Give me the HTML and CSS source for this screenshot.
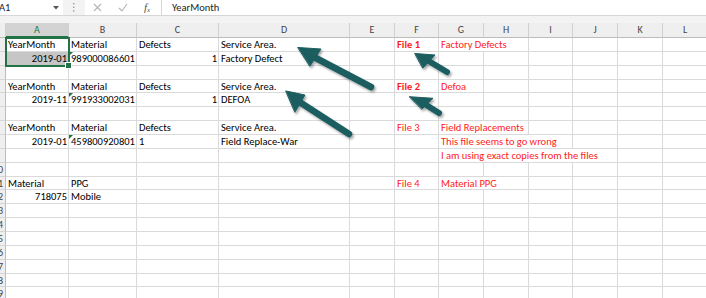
FILE: index.html
```html
<!DOCTYPE html>
<html>
<head>
<meta charset="utf-8">
<link rel="stylesheet" href="styles.css">
</head>
<body>
<div class="topbar">
  <div class="namebox"><span class="nb-text">A1</span><svg class="caret" width="6" height="4" viewBox="0 0 6 4"><path d="M0 0H6L3 3.5Z" fill="#555"/></svg></div>
  <div class="grip"><svg width="2" height="9" viewBox="0 0 2 9"><rect x="0" y="0" width="1.4" height="1.4" fill="#9a9a9a"/><rect x="0" y="3.6" width="1.4" height="1.4" fill="#9a9a9a"/><rect x="0" y="7.2" width="1.4" height="1.4" fill="#9a9a9a"/></svg></div>
  <div class="btns">
    <span class="slot slot-x"><svg width="9" height="9" viewBox="0 0 9 9"><path d="M1 1L8 8M8 1L1 8" stroke="#b4b4b4" stroke-width="1.1"/></svg></span>
    <span class="slot slot-ok"><svg width="10" height="9" viewBox="0 0 10 9"><path d="M1 5L4 8L9 1" stroke="#b4b4b4" stroke-width="1.1" fill="none"/></svg></span>
    <span class="slot slot-fx"><span class="fx">f<sub>x</sub></span></span>
  </div>
  <div class="formula">YearMonth</div>
</div>
<div class="strip"></div>
<div class="sheet">
  <div class="h corner"></div><div class="h sel">A</div><div class="h">B</div><div class="h">C</div><div class="h">D</div><div class="h">E</div><div class="h">F</div><div class="h">G</div><div class="h">H</div><div class="h">I</div><div class="h">J</div><div class="h">K</div><div class="h">L</div>

  <div class="rh"></div><div class="c act">YearMonth</div><div class="c">Material</div><div class="c">Defects</div><div class="c">Service Area.</div><div class="c"></div><div class="c red b">File 1</div><div class="c red sp2">Factory Defects</div><div class="c"></div><div class="c"></div><div class="c"></div><div class="c"></div>

  <div class="rh"></div><div class="c r selfill">2019-01</div><div class="c tri">989000086601</div><div class="c r">1</div><div class="c">Factory Defect</div><div class="c"></div><div class="c"></div><div class="c"></div><div class="c"></div><div class="c"></div><div class="c"></div><div class="c"></div><div class="c"></div>

  <div class="rh"></div><div class="c"></div><div class="c"></div><div class="c"></div><div class="c"></div><div class="c"></div><div class="c"></div><div class="c"></div><div class="c"></div><div class="c"></div><div class="c"></div><div class="c"></div><div class="c"></div>

  <div class="rh"></div><div class="c">YearMonth</div><div class="c">Material</div><div class="c">Defects</div><div class="c">Service Area.</div><div class="c"></div><div class="c red b">File 2</div><div class="c red">Defoa</div><div class="c"></div><div class="c"></div><div class="c"></div><div class="c"></div><div class="c"></div>

  <div class="rh"></div><div class="c r">2019-11</div><div class="c tri">991933002031</div><div class="c r">1</div><div class="c">DEFOA</div><div class="c"></div><div class="c"></div><div class="c"></div><div class="c"></div><div class="c"></div><div class="c"></div><div class="c"></div><div class="c"></div>

  <div class="rh"></div><div class="c"></div><div class="c"></div><div class="c"></div><div class="c"></div><div class="c"></div><div class="c"></div><div class="c"></div><div class="c"></div><div class="c"></div><div class="c"></div><div class="c"></div><div class="c"></div>

  <div class="rh"></div><div class="c">YearMonth</div><div class="c">Material</div><div class="c">Defects</div><div class="c">Service Area.</div><div class="c"></div><div class="c red">File 3</div><div class="c red sp2">Field Replacements</div><div class="c"></div><div class="c"></div><div class="c"></div><div class="c"></div>

  <div class="rh"></div><div class="c r">2019-01</div><div class="c tri">459800920801</div><div class="c">1</div><div class="c">Field Replace-War</div><div class="c"></div><div class="c"></div><div class="c red sp3">This file seems to go wrong</div><div class="c"></div><div class="c"></div><div class="c"></div>

  <div class="rh"></div><div class="c"></div><div class="c"></div><div class="c"></div><div class="c"></div><div class="c"></div><div class="c"></div><div class="c red sp4">I am using exact copies from the files</div><div class="c"></div><div class="c"></div>

  <div class="rh"><span>10</span></div><div class="c"></div><div class="c"></div><div class="c"></div><div class="c"></div><div class="c"></div><div class="c"></div><div class="c"></div><div class="c"></div><div class="c"></div><div class="c"></div><div class="c"></div><div class="c"></div>

  <div class="rh"><span>11</span></div><div class="c">Material</div><div class="c">PPG</div><div class="c"></div><div class="c"></div><div class="c"></div><div class="c red">File 4</div><div class="c red sp2">Material PPG</div><div class="c"></div><div class="c"></div><div class="c"></div><div class="c"></div>

  <div class="rh"><span>12</span></div><div class="c r">718075</div><div class="c">Mobile</div><div class="c"></div><div class="c"></div><div class="c"></div><div class="c"></div><div class="c"></div><div class="c"></div><div class="c"></div><div class="c"></div><div class="c"></div><div class="c"></div>

  <div class="rh"><span>13</span></div><div class="c"></div><div class="c"></div><div class="c"></div><div class="c"></div><div class="c"></div><div class="c"></div><div class="c"></div><div class="c"></div><div class="c"></div><div class="c"></div><div class="c"></div><div class="c"></div>

  <div class="rh"><span>14</span></div><div class="c"></div><div class="c"></div><div class="c"></div><div class="c"></div><div class="c"></div><div class="c"></div><div class="c"></div><div class="c"></div><div class="c"></div><div class="c"></div><div class="c"></div><div class="c"></div>

  <div class="rh"><span>15</span></div><div class="c"></div><div class="c"></div><div class="c"></div><div class="c"></div><div class="c"></div><div class="c"></div><div class="c"></div><div class="c"></div><div class="c"></div><div class="c"></div><div class="c"></div><div class="c"></div>

  <div class="rh"><span>16</span></div><div class="c"></div><div class="c"></div><div class="c"></div><div class="c"></div><div class="c"></div><div class="c"></div><div class="c"></div><div class="c"></div><div class="c"></div><div class="c"></div><div class="c"></div><div class="c"></div>

  <div class="rh"><span>17</span></div><div class="c"></div><div class="c"></div><div class="c"></div><div class="c"></div><div class="c"></div><div class="c"></div><div class="c"></div><div class="c"></div><div class="c"></div><div class="c"></div><div class="c"></div><div class="c"></div>

  <div class="rh"><span>18</span></div><div class="c"></div><div class="c"></div><div class="c"></div><div class="c"></div><div class="c"></div><div class="c"></div><div class="c"></div><div class="c"></div><div class="c"></div><div class="c"></div><div class="c"></div><div class="c"></div>

  <div class="rh"><span>19</span></div><div class="c"></div><div class="c"></div><div class="c"></div><div class="c"></div><div class="c"></div><div class="c"></div><div class="c"></div><div class="c"></div><div class="c"></div><div class="c"></div><div class="c"></div><div class="c"></div>

  <div class="selbox"><span class="handle"></span></div>
</div>
<svg class="arrows" width="706" height="298" viewBox="0 0 706 298">
  <defs>
    <filter id="sh" x="-30%" y="-30%" width="160%" height="160%">
      <feDropShadow dx="1.5" dy="2" stdDeviation="1.3" flood-color="#000" flood-opacity="0.35"/>
    </filter>
  </defs>
  <g fill="#1b5d60" stroke="#1b5d60" stroke-linecap="round" stroke-linejoin="round" filter="url(#sh)">
    <path d="M371 87L312 56" stroke-width="6.5" fill="none"/>
    <path d="M298 47.5L321 49L310 66Z" stroke-width="1"/>
    <path d="M349 134L298 101" stroke-width="6.5" fill="none"/>
    <path d="M286 91L305 95L295 112Z" stroke-width="1"/>
    <path d="M447 72L427 60" stroke-width="6" fill="none"/>
    <path d="M415 53.5L435 55L423 68Z" stroke-width="1"/>
    <path d="M439 113L423 103" stroke-width="6" fill="none"/>
    <path d="M409.5 96.7L433 98.3L422 109Z" stroke-width="1"/>
  </g>
</svg>
</body>
</html>
```

FILE: styles.css
```css
html, body {
  margin: 0;
  padding: 0;
}
body {
  width: 706px;
  height: 298px;
  overflow: hidden;
  position: relative;
  background: #ffffff;
  font-family: Carlito, Lato, "Liberation Sans", sans-serif;
  font-size: 10.5px;
  color: #000;
}
.topbar {
  display: flex;
  height: 15px;
  background: #f3f3f3;
  border-bottom: 1px solid #d6d6d6;
}
.namebox {
  width: 63px;
  background: #fff;
  display: flex;
  align-items: center;
  justify-content: space-between;
  padding-right: 4px;
  box-sizing: border-box;
  color: #222;
}
.nb-text {
  margin-left: -1px;
}
.grip {
  width: 22px;
  display: flex;
  align-items: center;
  justify-content: center;
}
.btns {
  width: 76px;
  background: #fff;
  display: flex;
  align-items: center;
}
.slot {
  display: flex;
  align-items: center;
  justify-content: center;
  height: 15px;
}
.slot-x { width: 25px; }
.slot-ok { width: 26px; }
.slot-fx { width: 22px; }
.fx {
  font-family: "Liberation Serif", serif;
  font-style: italic;
  font-size: 11px;
  color: #555;
  line-height: 1;
}
.fx sub {
  font-size: 7px;
  vertical-align: -1px;
}
.formula {
  flex: 1;
  background: #fff;
  border-left: 1px solid #d6d6d6;
  padding-left: 10px;
  line-height: 15px;
  color: #222;
}
.strip {
  height: 7px;
  background: #f3f3f3;
}
.sheet {
  display: grid;
  grid-template-columns: 6px 63px 68px 82px 131px 45px 44px 45px 45px 44px 45px 45px 45px;
  grid-template-rows: 15px;
  grid-auto-rows: 13.87px;
  position: relative;
}
.h {
  background: #efefef;
  border-right: 1px solid #d0d0d0;
  border-bottom: 1px solid #bcbcbc;
  box-sizing: border-box;
  text-align: center;
  color: #444;
  line-height: 14px;
  font-size: 10px;
}
.h.sel {
  background: #d3d3d3;
  color: #217346;
  border-bottom: 2px solid #217346;
}
.rh {
  background: #efefef;
  border-right: 1px solid #bcbcbc;
  border-bottom: 1px solid #d6d6d6;
  box-sizing: border-box;
  display: flex;
  justify-content: flex-end;
  overflow: hidden;
  color: #444;
  font-size: 10px;
  line-height: 13px;
  padding-right: 2px;
}
.c {
  border-right: 1px solid #dadada;
  border-bottom: 1px solid #dadada;
  box-sizing: border-box;
  padding: 0 2px;
  white-space: nowrap;
  overflow: hidden;
  line-height: 13px;
  position: relative;
}
.r {
  text-align: right;
  padding-right: 1px;
}
.red { color: #ff1a1a; }
.b { font-weight: bold; }
.sp2 { grid-column: span 2; }
.sp3 { grid-column: span 3; }
.sp4 { grid-column: span 4; }
.selfill {
  background: #c6c6c6;
}
.tri::before {
  content: "";
  position: absolute;
  left: 0;
  top: 0;
  border-top: 4px solid #1e7145;
  border-right: 4px solid transparent;
}
.selbox {
  position: absolute;
  left: 5px;
  top: 14px;
  width: 65px;
  height: 30px;
  border: 2px solid #217346;
  box-sizing: border-box;
  pointer-events: none;
}
.handle {
  position: absolute;
  right: -4px;
  bottom: -4px;
  width: 5px;
  height: 5px;
  background: #217346;
  border: 1px solid #fff;
}
.arrows {
  position: absolute;
  left: 0;
  top: 0;
  pointer-events: none;
}
```
